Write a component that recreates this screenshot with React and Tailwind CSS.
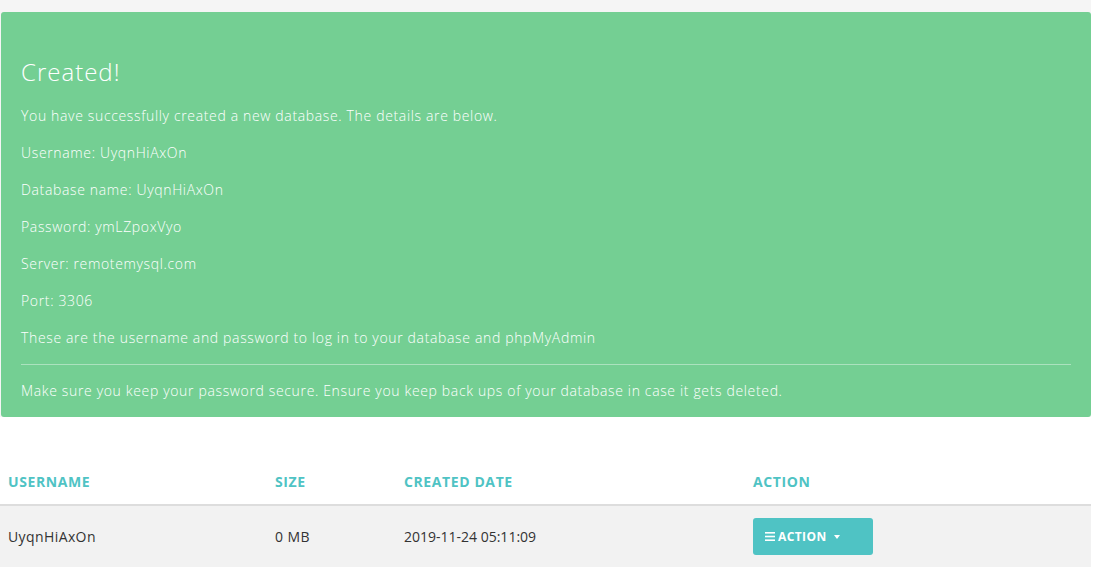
import { useState } from 'react';

const details = [
  'You have successfully created a new database. The details are below.',
  'Username: UyqnHiAxOn',
  'Database name: UyqnHiAxOn',
  'Password: ymLZpoxVyo',
  'Server: remotemysql.com',
  'Port: 3306',
  'These are the username and password to log in to your database and phpMyAdmin',
];

const databases = [
  { username: 'UyqnHiAxOn', size: '0 MB', created: '2019-11-24 05:11:09' },
];

const App = () => {
  const [open, setOpen] = useState(false);

  return (
    <div
      className="min-h-screen bg-white text-[#333]"
      style={{ fontFamily: '"Open Sans", "DejaVu Sans", sans-serif' }}
    >
      <div className="w-[1091px]">
        {/* Alert */}
        <div className="bg-[#f5f5f5] pt-[12px] pl-[1px]">
          <div className="bg-[#74cf93] rounded-[3px] text-white px-[20px] pt-[45px] pb-[16px]">
            <h4 className="text-[24px] font-light leading-[29px] mb-[19px] tracking-[1px]">Created!</h4>
            {details.map((line) => (
              <p key={line} className="text-[14px] leading-[21px] font-light mb-[16px] tracking-[0.65px]">
                {line}
              </p>
            ))}
            <hr className="border-0 border-t border-white/40 mb-[15px]" />
            <p className="text-[14px] leading-[21px] font-light tracking-[0.65px]">
              Make sure you keep your password secure. Ensure you keep back ups of your database in case it gets deleted.
            </p>
          </div>
        </div>

        {/* Table */}
        <table className="w-full mt-[42px] border-collapse text-[14px]">
          <thead>
            <tr className="border-b-2 border-[#dddddd] text-left text-[#4fc3c4] uppercase">
              <th className="w-[267px] px-[8px] py-[12px] leading-[21px] font-bold text-[14px] tracking-[0.6px]">Username</th>
              <th className="w-[129px] px-[8px] py-[12px] leading-[21px] font-bold text-[14px] tracking-[0.6px]">Size</th>
              <th className="w-[349px] px-[8px] py-[12px] leading-[21px] font-bold text-[14px] tracking-[0.6px]">Created Date</th>
              <th className="px-[8px] py-[12px] leading-[21px] font-bold text-[14px] tracking-[0.6px]">Action</th>
            </tr>
          </thead>
          <tbody>
            {databases.map((db) => (
              <tr key={db.username} className="bg-[#f2f2f2] h-[62px]">
                <td className="px-[8px] tracking-[0.4px]">{db.username}</td>
                <td className="px-[8px] tracking-[0.4px]">{db.size}</td>
                <td className="px-[8px]">{db.created}</td>
                <td className="px-[8px] relative">
                  <button
                    onClick={() => setOpen(!open)}
                    className="flex items-center w-[120px] h-[37px] pl-[12px] bg-[#4fc3c4] rounded-[3px] text-white text-[12px] font-bold uppercase tracking-[0.4px]"
                  >
                    <svg width="10" height="9" viewBox="0 0 10 9" className="mr-[3px]">
                      <rect x="0" y="0" width="10" height="1.6" fill="white" />
                      <rect x="0" y="3.7" width="10" height="1.6" fill="white" />
                      <rect x="0" y="7.4" width="10" height="1.6" fill="white" />
                    </svg>
                    Action
                    <svg width="6" height="4" viewBox="0 0 6 4" className="ml-[7px]">
                      <path d="M0 0h6L3 4z" fill="white" />
                    </svg>
                  </button>
                </td>
              </tr>
            ))}
          </tbody>
        </table>
      </div>
    </div>
  );
};

export default App;
